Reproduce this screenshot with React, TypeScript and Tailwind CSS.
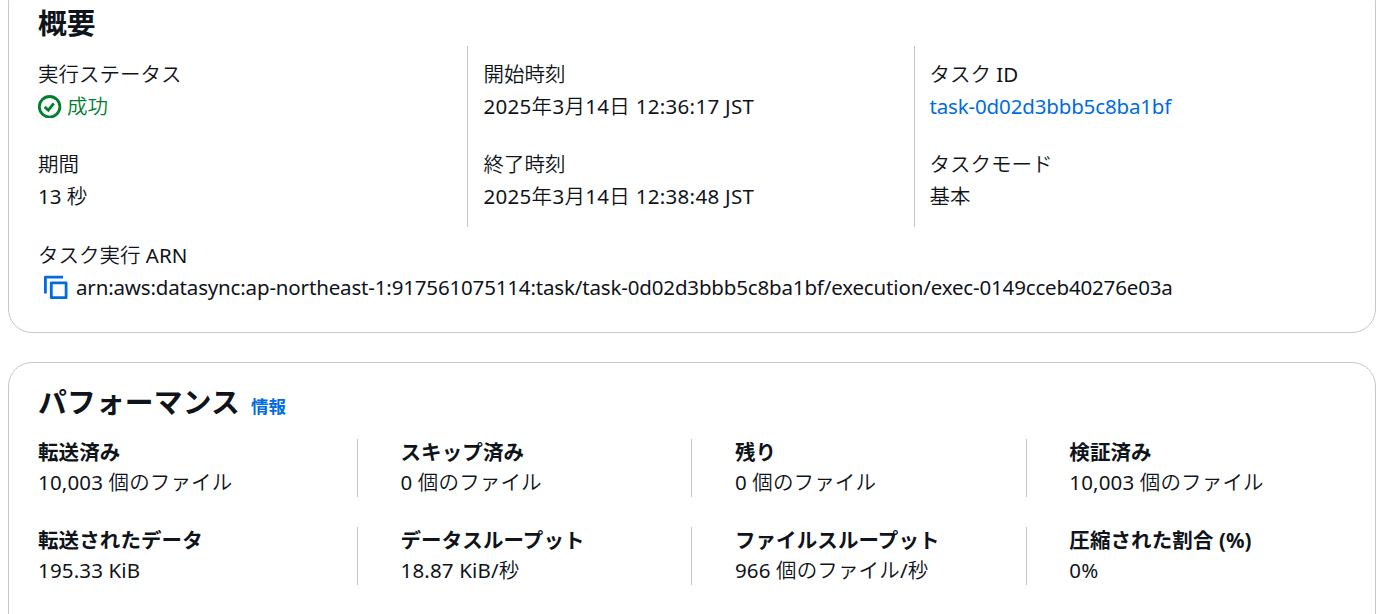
import React from 'react';

interface FieldProps {
  label: string;
  children: React.ReactNode;
}

interface Metric {
  label: string;
  value: string;
}

const metricRows: Metric[][] = [
  [
    { label: '転送済み', value: '10,003 個のファイル' },
    { label: 'スキップ済み', value: '0 個のファイル' },
    { label: '残り', value: '0 個のファイル' },
    { label: '検証済み', value: '10,003 個のファイル' },
  ],
  [
    { label: '転送されたデータ', value: '195.33 KiB' },
    { label: 'データスループット', value: '18.87 KiB/秒' },
    { label: 'ファイルスループット', value: '966 個のファイル/秒' },
    { label: '圧縮された割合 (%)', value: '0%' },
  ],
];

const SuccessIcon = () => (
  <svg className="w-6 h-6 shrink-0" viewBox="0 0 24 24" fill="none" stroke="currentColor" strokeWidth="2.8">
    <circle cx="11.6" cy="12.8" r="10.3" />
    <path d="M6.7 12.9l3.6 3.3 5.5-6.9" />
  </svg>
);

const CopyIcon = () => (
  <svg className="w-6 h-6 shrink-0" viewBox="0 0 24 24" fill="none" stroke="currentColor" strokeWidth="2.8" strokeLinejoin="round">
    <path d="M1.4 18.5V2.2H19" />
    <path d="M7.3 7.9h14.8v14.8h-14.8z" />
  </svg>
);

const Field: React.FC<FieldProps> = ({ label, children }) => (
  <div>
    <div className="h-8 leading-8">{label}</div>
    <div className="h-8 leading-8 flex items-center">{children}</div>
  </div>
);

const Overview = () => (
  <section className="-mt-[21px] h-[354px] rounded-3xl border border-[#c6c6cd] bg-white pt-[22px] pl-[29px]">
    <h2 className="h-[43px] text-[28.8px] leading-[42px] font-bold font-['Noto_Sans','Noto_Sans_CJK_JP',sans-serif]">
      概要
    </h2>
    <div className="flex mt-px h-[181px]">
      <div className="w-[429px] pt-3 flex flex-col gap-[26px]">
        <Field label="実行ステータス">
          <span className="flex items-center gap-[5px] text-[#00802f]">
            <SuccessIcon />
            成功
          </span>
        </Field>
        <Field label="期間">13 秒</Field>
      </div>
      <div className="w-[447px] border-l border-[#c6c6cd] pt-3 pl-[15.5px] flex flex-col gap-[26px]">
        <Field label="開始時刻">
          <span className="tracking-[0.3px]">2025年3月14日 12:36:17 JST</span>
        </Field>
        <Field label="終了時刻">
          <span className="tracking-[0.3px]">2025年3月14日 12:38:48 JST</span>
        </Field>
      </div>
      <div className="border-l border-[#c6c6cd] pt-3 pl-[14.5px] flex flex-col gap-[26px]">
        <Field label="タスク ID">
          <a className="text-[#006ce0] tracking-[-0.15px]">task-0d02d3bbb5c8ba1bf</a>
        </Field>
        <Field label="タスクモード">基本</Field>
      </div>
    </div>
    <div className="mt-3">
      <Field label="タスク実行 ARN">
        <span className="ml-[5.5px] mr-[8.5px] text-[#006ce0]">
          <CopyIcon />
        </span>
        <span className="tracking-[-0.16px]">
          arn:aws:datasync:ap-northeast-1:917561075114:task/task-0d02d3bbb5c8ba1bf/execution/exec-0149cceb40276e03a
        </span>
      </Field>
    </div>
  </section>
);

const Performance = () => (
  <section className="mt-[29px] h-[300px] rounded-3xl border border-[#c6c6cd] bg-white pt-[19px] pl-[29px]">
    <div className="flex items-baseline gap-[11px] h-[41px] font-bold font-['Noto_Sans','Noto_Sans_CJK_JP',sans-serif]">
      <h2 className="text-[28.8px] leading-[40px] tracking-[0.15px]">パフォーマンス</h2>
      <a className="text-[17.5px] text-[#006ce0]">情報</a>
    </div>
    <div className="mt-4 flex flex-col gap-[30px]">
      {metricRows.map((row, i) => (
        <div key={i} className="flex h-[58px]">
          {row.map((metric, j) => (
            <div
              key={metric.label}
              className={j === 0 ? 'w-[319px]' : 'w-[334.4px] border-l border-[#c6c6cd] pl-[42.5px]'}
            >
              <div className="leading-[30px] -mt-0.5 font-bold tracking-[0.1px] font-['Noto_Sans','Noto_Sans_CJK_JP',sans-serif]">
                {metric.label}
              </div>
              <div className="leading-[30px] tracking-[0.15px]">{metric.value}</div>
            </div>
          ))}
        </div>
      ))}
    </div>
  </section>
);

export default function App() {
  return (
    <div
      lang="ja"
      className="h-[614px] overflow-hidden bg-white pl-2 pr-6 text-[20.5px] text-[#0f141a] whitespace-nowrap font-['Noto_Sans','Noto_Sans_CJK_JP_DemiLight','Noto_Sans_CJK_JP',sans-serif] flow-root"
    >
      <Overview />
      <Performance />
    </div>
  );
}
